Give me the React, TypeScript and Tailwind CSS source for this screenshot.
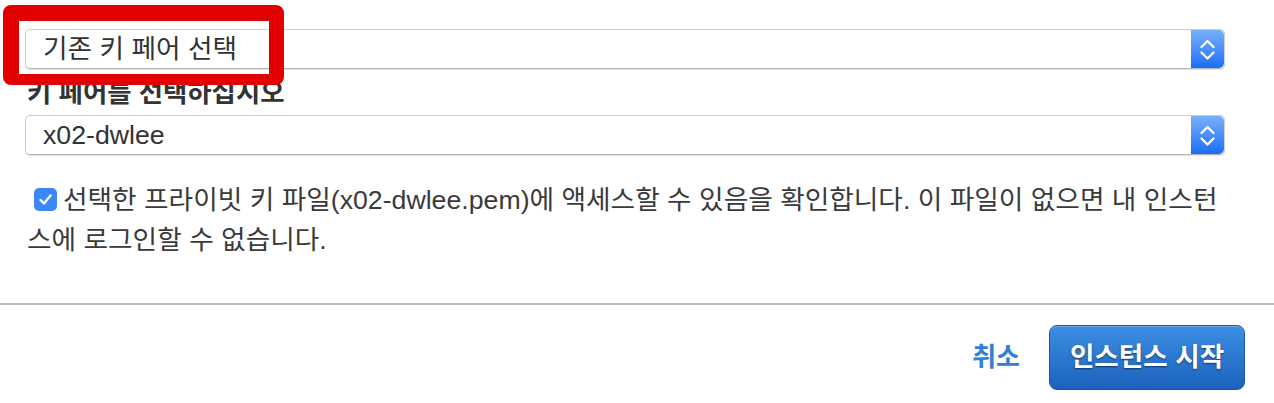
import React, { useState } from "react";

const Stepper = () => (
  <div className="w-[33px] h-full rounded-r-[5px] bg-gradient-to-b from-[#77affd] to-[#176ef5] flex items-center justify-center">
    <svg width="33" height="40" viewBox="0 0 33 40" fill="none">
      <path d="M10.5 18L16.5 12L22.5 18" stroke="white" strokeWidth="2.2" strokeLinecap="round" strokeLinejoin="round" />
      <path d="M10.5 23.5L16.5 29.5L22.5 23.5" stroke="white" strokeWidth="2.2" strokeLinecap="round" strokeLinejoin="round" />
    </svg>
  </div>
);

const SelectBox = ({ value }: { value: string }) => (
  <div className="h-[40px] flex items-stretch rounded-[5px] border border-[#cfcfcf] border-b-[#b5b5b5] bg-white shadow-[0_1px_1px_rgba(0,0,0,0.12)]">
    <div className="flex-1 flex items-center pl-[17px] text-[26.7px] text-[#333]">{value}</div>
    <Stepper />
  </div>
);

const App = () => {
  const [checked, setChecked] = useState(true);

  return (
    <div className="relative w-full h-[403px] bg-white overflow-hidden font-['Liberation_Sans','Noto_Sans_CJK_KR',sans-serif]">
      <div className="pl-[25px] pr-[49px] pt-[29px]">
        <SelectBox value="기존 키 페어 선택" />
        <div className="h-[46px] flex items-center pt-[4px] pl-[2px] text-[26.4px] font-bold text-[#333]">
          키 페어를 선택하십시오
        </div>
        <SelectBox value="x02-dwlee" />
        <p className="mt-[25px] text-[26.7px] leading-[40px] text-[#3a3a3a]">
          <span className="whitespace-nowrap">
            <button
              onClick={() => setChecked(!checked)}
              className={`inline-flex align-middle ml-[9px] mr-[6px] mb-[4px] w-[23px] h-[23px] rounded-[5px] items-center justify-center ${checked ? "bg-[#3b87f7]" : "bg-white border border-[#bbb]"}`}
            >
              {checked && (
                <svg width="15" height="15" viewBox="0 0 15 15" fill="none">
                  <path d="M2.5 8L6 11.5L12.5 3.5" stroke="white" strokeWidth="2.4" strokeLinecap="round" strokeLinejoin="round" />
                </svg>
              )}
            </button>
            선택한 프라이빗 키 파일(x02-dwlee.pem)에 액세스할 수 있음을 확인합니다. 이 파일이 없으면 내 인스턴
          </span>
          <br />
          <span className="pl-[2px]">스에 로그인할 수 없습니다.</span>
        </p>
      </div>

      <div className="mt-[43px] h-[2px] bg-[#bcbcbc]" />

      <div className="flex justify-end items-center gap-[29px] pr-[29px] pt-[20px]">
        <button className="text-[26px] font-bold text-[#2f80d8]">취소</button>
        <button className="w-[196px] h-[65px] rounded-[8px] border border-[#1656a6] bg-gradient-to-b from-[#3d8fe3] to-[#1c62bd] shadow-[inset_0_1px_0_rgba(255,255,255,0.25)] text-white text-[26.6px] font-bold [text-shadow:0_1px_2px_rgba(0,0,0,0.55)]">
          인스턴스 시작
        </button>
      </div>

      <div className="absolute left-[3px] top-[5px] w-[281px] h-[80px] rounded-[8px] border-[#e20000] border-t-[16px] border-l-[16px] border-r-[15px] border-b-[11px]" />
    </div>
  );
};

export default App;
